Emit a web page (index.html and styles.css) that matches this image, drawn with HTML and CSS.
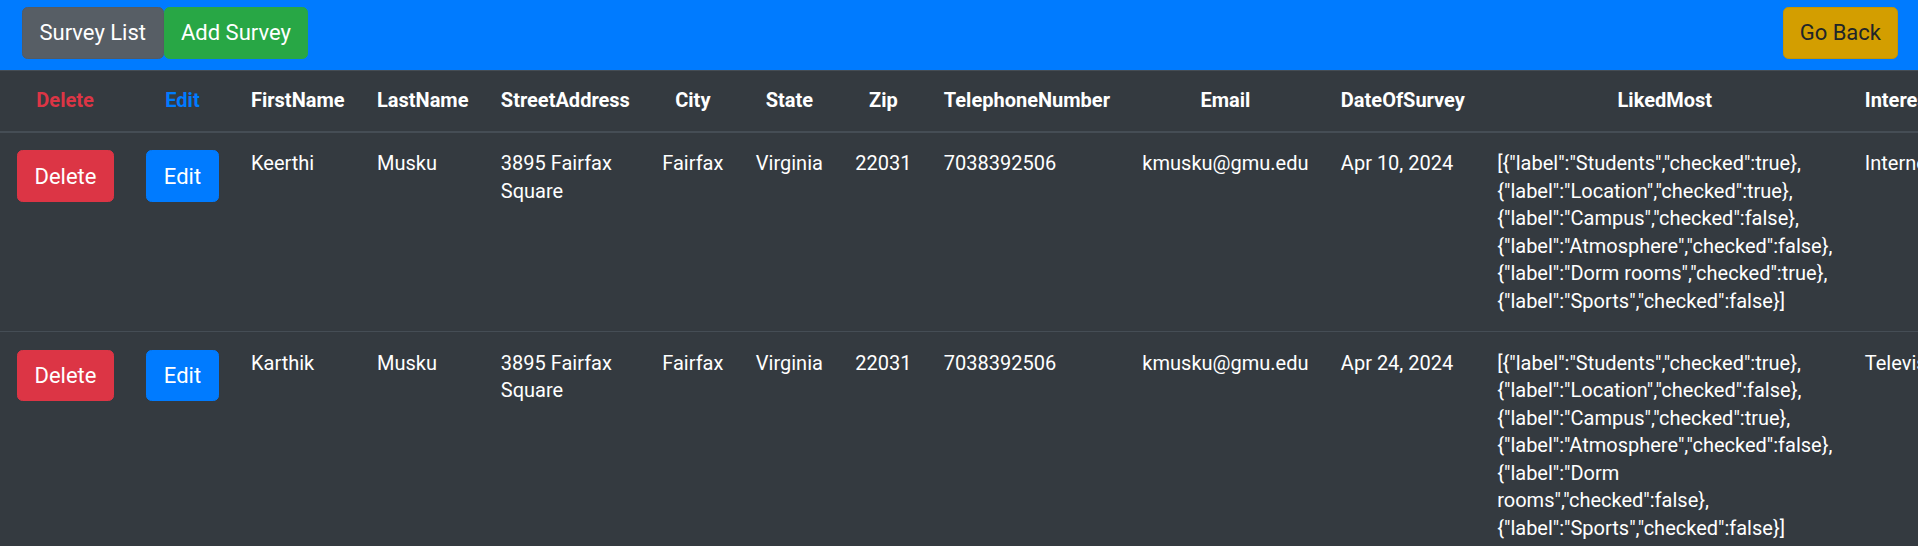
FILE: index.html
```html
<!DOCTYPE html>
<html lang="en">
<head>
<meta charset="utf-8">
<title>Survey List</title>
<link rel="stylesheet" href="styles.css">
</head>
<body>
<div class="page">
  <nav class="topbar">
    <div class="nav-left">
      <button class="btn btn-secondary">Survey List</button><button class="btn btn-success">Add Survey</button>
    </div>
    <button class="btn btn-warning">Go Back</button>
  </nav>
  <table class="survey-table">
    <thead>
      <tr>
        <th class="th-delete">Delete</th>
        <th class="th-edit">Edit</th>
        <th>FirstName</th>
        <th>LastName</th>
        <th>StreetAddress</th>
        <th>City</th>
        <th>State</th>
        <th>Zip</th>
        <th>TelephoneNumber</th>
        <th>Email</th>
        <th>DateOfSurvey</th>
        <th>LikedMost</th>
        <th>InterestedIn</th>
        <th>Recommendation</th>
      </tr>
    </thead>
    <tbody>
      <tr>
        <td><button class="btn btn-danger">Delete</button></td>
        <td><button class="btn btn-primary">Edit</button></td>
        <td>Keerthi</td>
        <td>Musku</td>
        <td>3895 Fairfax Square</td>
        <td>Fairfax</td>
        <td>Virginia</td>
        <td>22031</td>
        <td>7038392506</td>
        <td>kmusku@gmu.edu</td>
        <td>Apr 10, 2024</td>
        <td>[{"label":"Students","checked":true},{"label":"Location","checked":true},{"label":"Campus","checked":false},{"label":"Atmosphere","checked":false},{"label":"Dorm rooms","checked":true},{"label":"Sports","checked":false}]</td>
        <td>Internet</td>
        <td>Very Likely</td>
      </tr>
      <tr>
        <td><button class="btn btn-danger">Delete</button></td>
        <td><button class="btn btn-primary">Edit</button></td>
        <td>Karthik</td>
        <td>Musku</td>
        <td>3895 Fairfax Square</td>
        <td>Fairfax</td>
        <td>Virginia</td>
        <td>22031</td>
        <td>7038392506</td>
        <td>kmusku@gmu.edu</td>
        <td>Apr 24, 2024</td>
        <td>[{"label":"Students","checked":true},{"label":"Location","checked":false},{"label":"Campus","checked":true},{"label":"Atmosphere","checked":false},{"label":"Dorm rooms","checked":false},{"label":"Sports","checked":false}]</td>
        <td>Television</td>
        <td>Likely</td>
      </tr>
    </tbody>
  </table>
</div>
</body>
</html>
```
FILE: styles.css
```css
html, body {
  margin: 0;
  padding: 0;
  overflow: hidden;
  background: #343a40;
}

body {
  font-family: Roboto, "Noto Sans", "Liberation Sans", sans-serif;
  font-size: 20px;
  line-height: 27.5px;
  color: #ffffff;
}

.topbar {
  display: flex;
  justify-content: space-between;
  align-items: flex-start;
  background: #007bff;
  padding: 7.3px 20px 11.3px 22px;
}

.nav-left {
  display: flex;
}

.btn {
  font-family: inherit;
  font-size: 22px;
  line-height: 33px;
  padding: 8.2px 16.5px;
  border: 1px solid transparent;
  border-radius: 5.5px;
  color: #ffffff;
  cursor: pointer;
  vertical-align: top;
  white-space: nowrap;
}

.btn-secondary {
  background: #575e65;
  border-color: #545b62;
}

.btn-success {
  background: #28a745;
  border-color: #28a745;
}

.btn-warning {
  background: #d39e00;
  border-color: #c69500;
  color: #212529;
  padding: 8.2px 16px;
}

.btn-danger {
  background: #dc3545;
  border-color: #dc3545;
}

.btn-primary {
  background: #007bff;
  border-color: #007bff;
}

.survey-table {
  width: 100%;
  border-collapse: collapse;
  background: #343a40;
  color: #ffffff;
}

.survey-table th {
  padding: 16.2px 16.2px;
  border-top: 1px solid #454d55;
  border-bottom: 2px solid #454d55;
  text-align: center;
  font-weight: 700;
  vertical-align: bottom;
}

.survey-table td {
  padding: 17.5px 16.2px 16px;
  border-top: 1px solid #454d55;
  text-align: left;
  vertical-align: top;
}

.survey-table td:first-child {
  padding-left: 17px;
}

.survey-table .th-delete {
  color: #dc3545;
}

.survey-table .th-edit {
  color: #007bff;
}
```
